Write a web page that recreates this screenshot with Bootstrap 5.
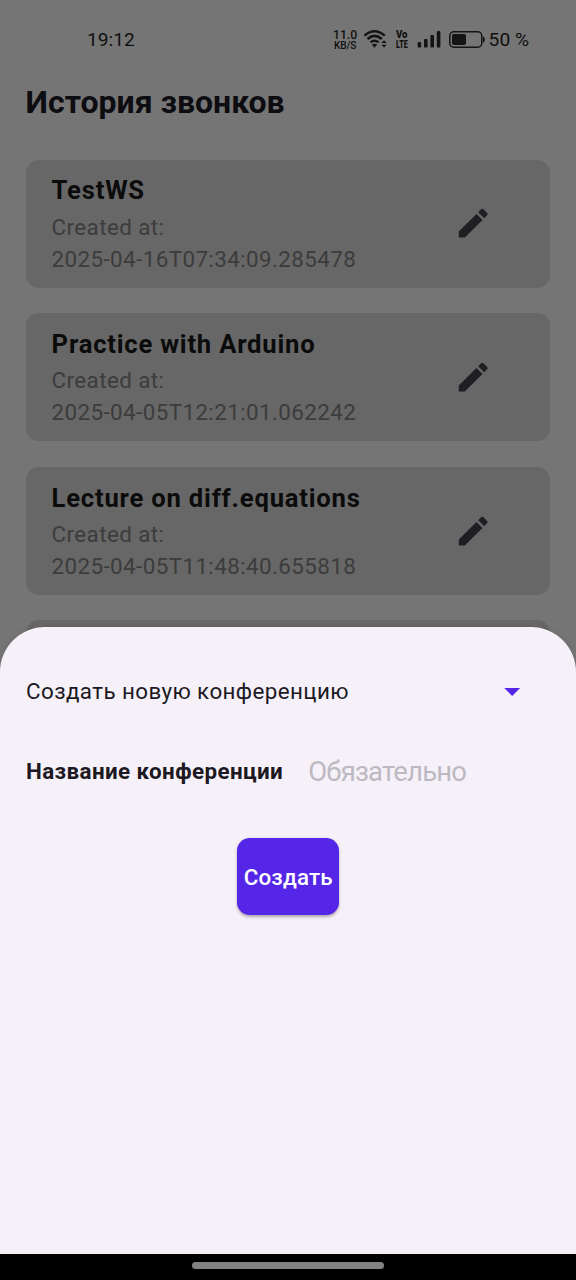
<!DOCTYPE html>
<html lang="ru">
<head>
<meta charset="utf-8">
<meta name="viewport" content="width=device-width, initial-scale=1">
<title>История звонков</title>
<link href="https://cdn.jsdelivr.net/npm/bootstrap@5.3.0/dist/css/bootstrap.min.css" rel="stylesheet">
<style>
  body { font-family: Roboto, "Noto Sans", sans-serif; background: #757575; color: #1c1922; }
  .screen { height: 1280px; background: #757575; }
  .status { height: 76px; padding: 4px 47px 0 87px; font-size: 19.2px; color: #101010; }
  .status svg { display: block; }
  .net-rate { width: 25px; margin-right: 5px; font-weight: 500; font-size: 12.2px; line-height: 11px; }
  .net-unit { font-size: 10px; line-height: 9px; letter-spacing: -.1px; }
  .volte { width: 13px; line-height: 9.5px; margin-right: 8px; font-weight: 900; font-size: 10.6px; }
  .volte span { display: block; transform-origin: 0 50%; }
  .volte .vo { transform: scaleX(.9); }
  .volte .lte { transform: scaleX(.68); }
  .page-title { font-size: 32px; line-height: 38px; margin: 7px 0 38.6px; color: #0d0c10; padding-left: 25.6px; }
  .calls { gap: 25.6px; padding: 0 25.6px; }
  .call { height: 128px; flex: none; border-radius: 12.8px; background: #676767; padding: 0 57.6px 0 26px; }
  .call-name { font-size: 25.6px; line-height: 37px; padding-bottom: 1.4px; letter-spacing: .8px; color: #0b0b0b; }
  .call-date { font-size: 22.4px; line-height: 32px; letter-spacing: .4px; color: #3c3c3c; }
  .sheet { height: 653px; background: #f6f1f9; border-radius: 45px 45px 0 0; box-shadow: 0 0 5px rgba(0,0,0,.12); padding: 38px 25.6px 0 26px; }
  .picker { height: 53px; font-size: 22.4px; letter-spacing: .4px; padding-right: 26px; }
  .field { height: 54px; margin-top: 27px; gap: 25px; font-size: 22.4px; }
  .field-label { letter-spacing: .4px; }
  .field-hint { font-size: 27.5px; letter-spacing: -.82px; color: #bdb9c1; }
  .btn-create { width: 102.4px; height: 76.8px; margin-top: 39.4px; padding: 2px 0 0; border: 0; border-radius: 12.8px; background: #5626e8; color: #fff; font-size: 22.4px; font-weight: 500; letter-spacing: .16px; box-shadow: 0 1.6px 3px rgba(0,0,0,.3); }
  .gesture { height: 26px; background: #000; padding-top: 8px; }
  .gesture-bar { width: 192px; height: 7px; border-radius: 4px; background: #828282; }
</style>
</head>
<body>
<div class="screen position-relative overflow-hidden">
  <header class="status d-flex align-items-center justify-content-between">
    <span>19:12</span>
    <div class="d-flex align-items-center">
      <div class="net-rate text-center"><div>11.0</div><div class="net-unit">KB/S</div></div>
      <svg width="33" height="26" viewBox="364 26 33 26" fill="#141414">
        <g fill="none" stroke="#141414" stroke-width="2.5">
          <path d="M365.4 34.6Q375.5 25.8 385.8 34.6"/>
          <path d="M368.5 38Q375.5 31.8 382.8 38"/>
          <path d="M371.6 41.4Q375.5 38 379.6 41.4"/>
        </g>
        <path d="M372.8 43.6Q375.5 41.8 378.2 43.6L375.5 46.8ZM382.3 42l2.7-2.8 2.7 2.8zM382.3 43.8l2.7 2.8 2.7-2.8z"/>
      </svg>
      <div class="volte"><span class="vo">Vo</span><span class="lte">LTE</span></div>
      <svg width="72" height="26" viewBox="417 26 72 26" fill="#141414">
        <rect x="417.6" y="41" width="3.6" height="5.4" rx="1"/>
        <rect x="424" y="38" width="3.6" height="8.4" rx="1"/>
        <rect x="430.4" y="34" width="3.6" height="12.4" rx="1"/>
        <rect x="436.8" y="30" width="3.6" height="16.4" rx="1"/>
        <rect x="449.8" y="30.8" width="32" height="15.4" rx="4" fill="none" stroke="#141414" stroke-width="1.5"/>
        <rect x="452" y="33" width="14" height="11" rx="2"/>
        <path d="M483 35.5q1.9.3 1.9 3t-1.9 3z"/>
      </svg>
      <span class="text-nowrap">50 %</span>
    </div>
  </header>

  <h1 class="page-title fw-bold">История звонков</h1>

  <main class="calls d-flex flex-column">
    <article class="call d-flex align-items-center justify-content-between">
      <div>
        <div class="call-name fw-bold">TestWS</div>
        <div class="call-date">Created at:<br>2025-04-16T07:34:09.285478</div>
      </div>
      <svg width="38.4" height="38.4" viewBox="0 0 24 24" fill="#1f1e22"><path d="M3 17.25V21h3.75L17.81 9.94l-3.75-3.75L3 17.25zM20.71 7.04a1 1 0 0 0 0-1.41l-2.34-2.34a1 1 0 0 0-1.41 0l-1.83 1.83 3.75 3.75 1.83-1.83z"/></svg>
    </article>
    <article class="call d-flex align-items-center justify-content-between">
      <div>
        <div class="call-name fw-bold">Practice with Arduino</div>
        <div class="call-date">Created at:<br>2025-04-05T12:21:01.062242</div>
      </div>
      <svg width="38.4" height="38.4" viewBox="0 0 24 24" fill="#1f1e22"><path d="M3 17.25V21h3.75L17.81 9.94l-3.75-3.75L3 17.25zM20.71 7.04a1 1 0 0 0 0-1.41l-2.34-2.34a1 1 0 0 0-1.41 0l-1.83 1.83 3.75 3.75 1.83-1.83z"/></svg>
    </article>
    <article class="call d-flex align-items-center justify-content-between">
      <div>
        <div class="call-name fw-bold">Lecture on diff.equations</div>
        <div class="call-date">Created at:<br>2025-04-05T11:48:40.655818</div>
      </div>
      <svg width="38.4" height="38.4" viewBox="0 0 24 24" fill="#1f1e22"><path d="M3 17.25V21h3.75L17.81 9.94l-3.75-3.75L3 17.25zM20.71 7.04a1 1 0 0 0 0-1.41l-2.34-2.34a1 1 0 0 0-1.41 0l-1.83 1.83 3.75 3.75 1.83-1.83z"/></svg>
    </article>
    <article class="call"></article>
  </main>

  <!-- Bottom sheet over the call list -->
  <section class="sheet position-absolute bottom-0 start-0 w-100 d-flex flex-column">
    <div class="picker d-flex align-items-center justify-content-between">
      <span>Создать новую конференцию</span>
      <svg width="38.4" height="38.4" viewBox="0 0 24 24" fill="#5626e8" style="margin-right:-7px"><path d="M7 10l5 5 5-5z"/></svg>
    </div>
    <div class="field d-flex align-items-center">
      <span class="field-label fw-bold">Название конференции</span>
      <span class="field-hint">Обязательно</span>
    </div>
    <button type="button" class="btn btn-create align-self-center">Создать</button>
  </section>
  <footer class="gesture position-absolute bottom-0 start-0 w-100">
    <div class="gesture-bar mx-auto"></div>
  </footer>
</div>
<script src="https://cdn.jsdelivr.net/npm/bootstrap@5.3.0/dist/js/bootstrap.bundle.min.js"></script>
</body>
</html>
